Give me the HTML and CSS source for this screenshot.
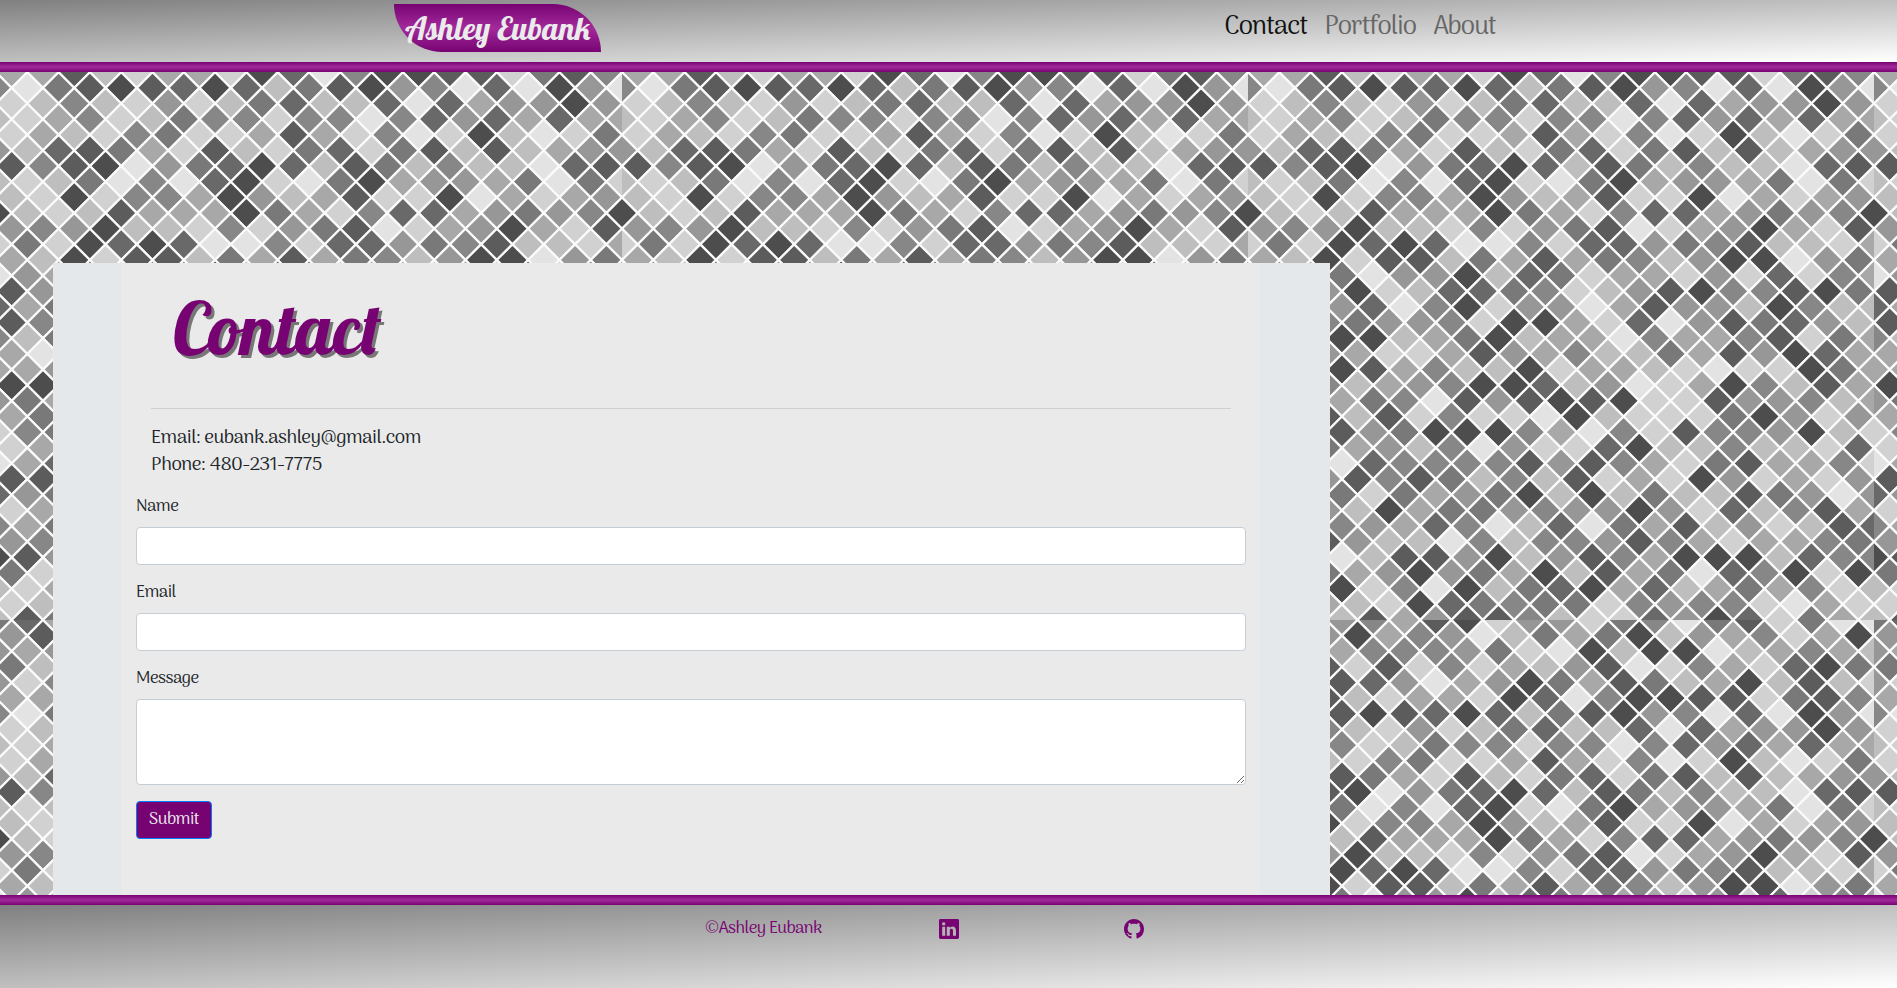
FILE: index.html
```html
<!DOCTYPE html>
<html lang="en">
<head>
<meta charset="utf-8">
<title>Contact</title>
<link rel="stylesheet" href="styles.css">
</head>
<body>
<svg class="mosaic" aria-hidden="true">
  <defs><pattern id="tile" x="-4" y="-6" width="626" height="626" patternUnits="userSpaceOnUse"></pattern></defs>
  <rect width="100%" height="100%" fill="url(#tile)"></rect>
</svg>
<header class="header">
  <a class="brand">Ashley Eubank</a>
  <nav class="nav">
    <a class="nav-link active">Contact</a>
    <a class="nav-link portfolio">Portfolio</a>
    <a class="nav-link about">About</a>
  </nav>
</header>
<div class="bar"></div>
<main class="main">
  <section class="panel">
    <div class="content">
      <div class="intro">
        <h1 class="title">Contact</h1>
        <hr class="rule">
        <p class="details">Email: eubank.ashley@gmail.com<br>Phone: 480-231-7775</p>
      </div>
      <form class="form">
        <label class="label" for="name">Name</label>
        <input class="field" id="name" type="text">
        <label class="label" for="email">Email</label>
        <input class="field" id="email" type="email">
        <label class="label" for="message">Message</label>
        <textarea class="field message" id="message"></textarea>
        <button class="submit" type="button">Submit</button>
      </form>
    </div>
  </section>
</main>
<div class="bar"></div>
<footer class="footer">
  <span class="copyright">©Ashley Eubank</span>
  <svg class="icon linkedin" viewBox="0 0 16 16"><path d="M0 1.146C0 .513.526 0 1.175 0h13.65C15.474 0 16 .513 16 1.146v13.708c0 .633-.526 1.146-1.175 1.146H1.175C.526 16 0 15.487 0 14.854V1.146zm4.943 12.248V6.169H2.542v7.225h2.401zm-1.2-8.212c.837 0 1.358-.554 1.358-1.248-.015-.709-.52-1.248-1.342-1.248-.822 0-1.359.54-1.359 1.248 0 .694.521 1.248 1.327 1.248h.016zm4.908 8.212V9.359c0-.216.016-.432.08-.586.173-.431.568-.878 1.232-.878.869 0 1.216.662 1.216 1.634v3.865h2.401V9.25c0-2.22-1.184-3.252-2.764-3.252-1.274 0-1.845.7-2.165 1.193v.025h-.016a5.54 5.54 0 0 1 .016-.025V6.169h-2.4c.03.678 0 7.225 0 7.225h2.4z"/></svg>
  <svg class="icon github" viewBox="0 0 16 16"><path d="M8 0C3.58 0 0 3.58 0 8c0 3.54 2.29 6.53 5.47 7.59.4.07.55-.17.55-.38 0-.19-.01-.82-.01-1.49-2.01.37-2.53-.49-2.69-.94-.09-.23-.48-.94-.82-1.13-.28-.15-.68-.52-.01-.53.63-.01 1.08.58 1.23.82.72 1.21 1.87.87 2.33.66.07-.52.28-.87.51-1.07-1.78-.2-3.64-.89-3.64-3.95 0-.87.31-1.59.82-2.15-.08-.2-.36-1.02.08-2.12 0 0 .67-.21 2.2.82.64-.18 1.32-.27 2-.27.68 0 1.36.09 2 .27 1.53-1.04 2.2-.82 2.2-.82.44 1.1.16 1.92.08 2.12.51.56.82 1.27.82 2.15 0 3.07-1.87 3.75-3.65 3.95.29.25.54.73.54 1.48 0 1.07-.01 1.93-.01 2.2 0 .21.15.46.55.38A8.012 8.012 0 0 0 16 8c0-4.42-3.58-8-8-8z"/></svg>
</footer>
<script src="mosaic.js"></script>
</body>
</html>
```
FILE: styles.css
```css
* { box-sizing: border-box; }
body {
  margin: 0;
  height: 988px;
  overflow: hidden;
  display: flex;
  flex-direction: column;
  font: 17px/24px "Arima Madurai", Arima, Lato, sans-serif;
  letter-spacing: -0.5px;
  color: #212529;
}
.mosaic { position: absolute; inset: 0; width: 100%; height: 100%; z-index: -1; }
.header {
  height: 62px;
  flex: none;
  display: flex;
  justify-content: space-between;
  align-items: flex-start;
  padding: 4px 401px 0 394px;
  background: linear-gradient(to bottom right, #808080, #fff);
}
.brand {
  width: 207px;
  height: 48px;
  padding-left: 11px;
  border-radius: 0 48px;
  background: linear-gradient(#770372, #a32a9b, #770372);
  color: #ebebeb;
  font: 32px/48px Lobster, "Liberation Serif", serif;
  letter-spacing: 0;
  white-space: nowrap;
}
.nav { display: flex; gap: 17px; padding-top: 6px; }
.nav-link { font-size: 26px; line-height: 36px; letter-spacing: -0.85px; color: #666; }
.nav-link.active { color: #111; }
.bar {
  height: 10px;
  flex: none;
  background: linear-gradient(#770372, #a32a9b 50%, #770372);
}
.main { flex: 1; padding: 191px 0 0 53px; }
.panel { width: 1277px; height: 632px; padding: 0 70px 0 68px; background: #e4e8eb; }
.content { height: 632px; padding: 0 14px 0 15px; background: #eaeaea; }
.intro { padding: 0 15px; }
.title {
  margin: 0;
  height: 145px;
  padding: 20px 0 0 22px;
  color: #770372;
  font: 72px/90px Lobster, "Liberation Serif", serif;
  letter-spacing: 0;
  text-shadow: 3px 3px 0 #777;
}
.rule { margin: 0; border: 0; border-top: 1px solid #d0d0d0; }
.details { margin: 16px 0 15px; font-size: 19px; line-height: 27px; letter-spacing: -0.45px; }
.form { display: flex; flex-direction: column; align-items: flex-start; }
.label { line-height: 26px; margin-bottom: 7px; }
.field {
  width: 100%;
  height: 38px;
  margin: 0 0 15px;
  border: 1px solid #c5cdd5;
  border-radius: 4px;
  background: #fff;
}
.message { height: 86px; margin-bottom: 16px; }
.submit {
  width: 76px;
  height: 38px;
  padding: 0 0 1px;
  border: 1px solid #007bff;
  border-radius: 4px;
  background: #770372;
  color: #ebebeb;
  font: inherit;
  letter-spacing: inherit;
}
.footer {
  height: 83px;
  flex: none;
  display: flex;
  align-items: flex-start;
  padding: 14px 0 0 705px;
  background: linear-gradient(to bottom right, #808080, #fff);
  color: #770372;
}
.copyright { width: 234px; margin-top: -2px; }
.icon { width: 20px; height: 20px; fill: #770372; }
.github { margin-left: 165px; }
```
FILE: mosaic.js
```js
// Shade map of the diamond mosaic: one string per row, 0 = darkest, 9 = lightest.
const rows = [
  "32654610855834931839", "51506459736307564860", "56564445389070097646", "37181848675198468203",
  "58412596503613760717", "66178668029400118314", "49310120273105492905", "87478587327729265505",
  "78648734484494252626", "86784388616849807983", "57213681783283171765", "14109532027137477921",
  "78739492089306556393", "78084460576188096865", "07871666036842265354", "54507784853198650681",
  "83802029948225341778", "67081173616347500953", "95639550723866858284", "15508722348751044103",
  "26352940855961557047", "14435548006829513257", "47300763076694664183", "69568861564773615026",
  "66501647708667898803", "00476540027598604716", "53663491510108815547", "63171848890788830585",
  "84315300046948144507", "86365749588207747782", "96292444415146831664", "11514137471868058685",
  "25338365307073771359", "86570633545505827416", "46345624972936175871", "54157794744514686643",
  "01597115075146000724", "38365053607163924080", "78608490732062763648", "87678023433845448968",
  "71371651147882502836"
];
const lastColumn = "978965806676668852477";
const tones = [77, 92, 105, 121, 135, 151, 168, 190, 209, 227];
const step = 31.3, half = step / 2;
const tile = document.getElementById("tile");

function diamond(cx, cy, level) {
  const p = document.createElementNS("http://www.w3.org/2000/svg", "path");
  const t = tones[level];
  p.setAttribute("d", `M${cx} ${cy - half}l${half} ${half}l${-half} ${half}l${-half} ${-half}z`);
  p.setAttribute("fill", `rgb(${t},${t},${t})`);
  p.setAttribute("stroke", "#fbfbfb");
  p.setAttribute("stroke-width", "2.2");
  tile.appendChild(p);
}

rows.forEach((row, r) => {
  const shift = r % 2 ? half : 0;
  [...row].forEach((level, k) => diamond(k * step + shift, r * half, level));
  // Odd rows straddle the tile edge on neither side; even rows need a closing half diamond.
  if (!shift) diamond(626, r * half, lastColumn[r / 2]);
});
```
